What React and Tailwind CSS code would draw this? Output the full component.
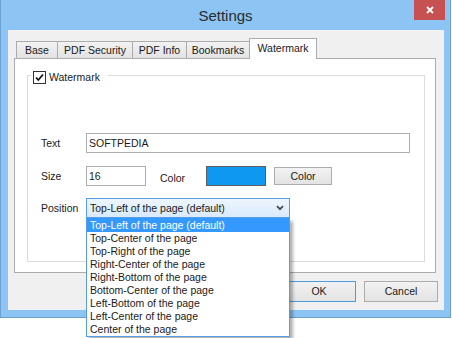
import React from 'react';

const tabs = [
  { label: "Base", w: "w-[42px]" },
  { label: "PDF Security", w: "w-[76px]" },
  { label: "PDF Info", w: "w-[55px]" },
  { label: "Bookmarks", w: "w-[64px]" },
];

const positions = [
  "Top-Left of the page (default)",
  "Top-Center of the page",
  "Top-Right of the page",
  "Right-Center of the page",
  "Right-Bottom of the page",
  "Bottom-Center of the page",
  "Left-Bottom of the page",
  "Left-Center of the page",
  "Center of the page",
];

export default function App() {
  return (
    <div className="w-[452px] h-[338px] bg-white font-['Liberation_Sans',Arial,sans-serif] text-[10.5px] leading-none text-[#1a1a1a]">
      <div className="w-[451px] h-[318px] bg-[#8cc5f4] border-x border-b border-[#6a9fce] flex flex-col">
        {/* Title bar */}
        <div className="relative h-[30px] flex items-center justify-center shrink-0">
          <span className="text-[15px] text-[#2b2b2b]">Settings</span>
          <div className="absolute top-0 right-[5px] w-[31px] h-[20px] bg-[#c75050] flex items-center justify-center">
            <svg width="8" height="8" viewBox="0 0 8 8">
              <path d="M1 1L7 7M7 1L1 7" stroke="white" strokeWidth="1.8" />
            </svg>
          </div>
        </div>

        {/* Client area */}
        <div className="ml-[7px] w-[436px] h-[280px] bg-[#f0f0f0] pt-[8px] pl-[6px] flex flex-col">
          {/* Tabs */}
          <div className="flex items-end h-[20px] pl-[2px]">
            {tabs.map((t, i) => (
              <div
                key={t.label}
                className={`${t.w} ${i > 0 ? "-ml-px" : ""} h-[17px] border-x border-t border-[#acacac] bg-gradient-to-b from-[#f2f2f2] to-[#e3e3e3] flex items-center justify-center`}
              >
                {t.label}
              </div>
            ))}
            <div className="-ml-px w-[68px] h-[21px] -mb-px relative z-10 border-x border-t border-[#acacac] bg-white flex items-center justify-center pb-[2px]">
              Watermark
            </div>
          </div>

          {/* Tab panel */}
          <div className="w-[422px] h-[215px] bg-white border border-[#acacac] pt-[16px] pl-[12px]">
            <div className="relative w-[398px] h-[187px] border border-[#dcdcdc] pl-[13px] pt-[57px]">
              {/* legend */}
              <div className="absolute left-[3px] top-[-5px] h-[13px] bg-white pl-[2px] pr-[8px] flex items-center">
                <div className="w-[13px] h-[13px] border border-[#333] bg-white flex items-center justify-center">
                  <svg width="11" height="11" viewBox="0 0 11 11">
                    <path d="M2 5.5L4.3 8L9 2.5" stroke="#111" strokeWidth="1.8" fill="none" />
                  </svg>
                </div>
                <span className="ml-[3px]">Watermark</span>
              </div>

              {/* Text row */}
              <div className="flex items-center h-[20px]">
                <span className="w-[45px]">Text</span>
                <div className="w-[324px] h-[20px] border border-[#abadb3] bg-white flex items-center pl-[2px]">
                  SOFTPEDIA
                </div>
              </div>

              {/* Size row */}
              <div className="flex items-center h-[20px] mt-[13px]">
                <span className="w-[45px]">Size</span>
                <div className="w-[60px] h-[20px] border border-[#abadb3] bg-white flex items-center pl-[2px]">
                  16
                </div>
                <span className="ml-[14px] w-[46px] mt-[4px]">Color</span>
                <div className="w-[60px] h-[20px] border border-[#5e5e5e] bg-[#0e98f1]" />
                <div className="ml-[8px] w-[58px] h-[18px] border border-[#acacac] bg-gradient-to-b from-[#f2f2f2] to-[#e3e3e3] flex items-center justify-center">
                  Color
                </div>
              </div>

              {/* Position row */}
              <div className="flex items-center h-[20px] mt-[12px]">
                <span className="w-[45px]">Position</span>
                <div className="relative w-[204px] h-[20px] border border-[#569de5] bg-gradient-to-b from-[#eef6fd] to-[#d8eafc] flex items-center pl-[3px]">
                  <span>Top-Left of the page (default)</span>
                  <svg className="absolute right-[5px] top-[6px]" width="8" height="6" viewBox="0 0 8 6">
                    <path d="M1 1.2L4 4.2L7 1.2" stroke="#4a4a4a" strokeWidth="1.8" fill="none" />
                  </svg>
                  {/* open list */}
                  <div className="absolute left-[-1px] top-[19px] w-[204px] z-20 bg-white border-x border-b border-[#569de5] shadow-[3px_3px_3px_rgba(0,0,0,0.3)]">
                    {positions.map((p, i) => (
                      <div
                        key={p}
                        className={`pl-[3px] flex items-center ${i === 0 ? "h-[14px] bg-[#3399ff] text-white" : "h-[13px]"}`}
                      >
                        {p}
                      </div>
                    ))}
                  </div>
                </div>
              </div>
            </div>
          </div>

          {/* Buttons */}
          <div className="flex justify-end gap-[8px] pr-[6px] mt-[8px]">
            <div className="w-[74px] h-[21px] border border-[#4a9be0] bg-gradient-to-b from-[#f2f2f2] to-[#e3e3e3] flex items-center justify-center">
              OK
            </div>
            <div className="w-[74px] h-[21px] border border-[#acacac] bg-gradient-to-b from-[#f2f2f2] to-[#e3e3e3] flex items-center justify-center">
              Cancel
            </div>
          </div>
        </div>
      </div>
    </div>
  );
}
